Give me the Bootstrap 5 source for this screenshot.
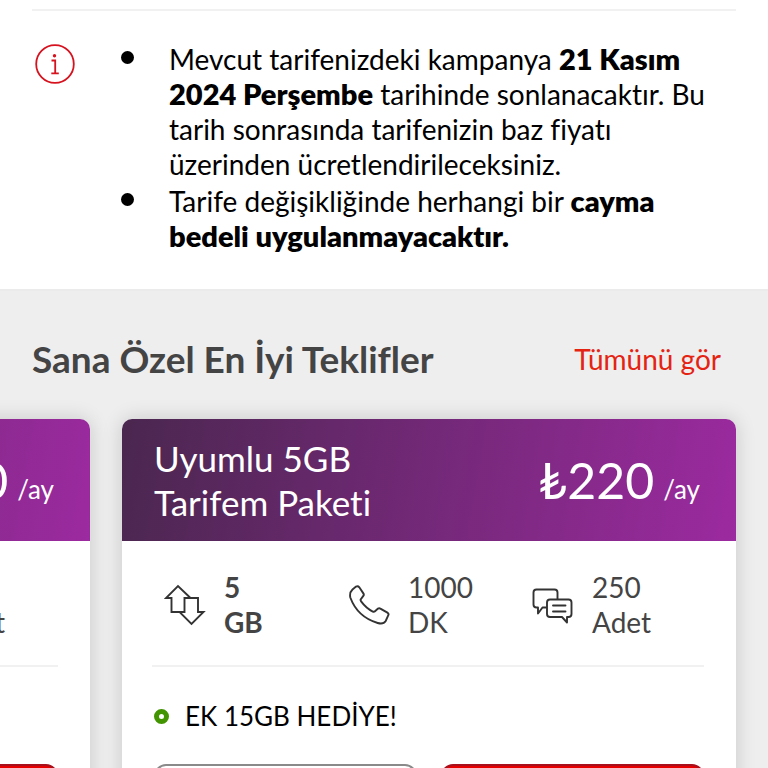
<!DOCTYPE html>
<html lang="tr">
<head>
<meta charset="utf-8">
<meta name="viewport" content="width=device-width, initial-scale=1">
<title>Sana Özel En İyi Teklifler</title>
<link href="https://cdn.jsdelivr.net/npm/bootstrap@5.3.0/dist/css/bootstrap.min.css" rel="stylesheet">
<style>
  body { font-family: Lato, "Noto Sans", sans-serif; font-size: 28px; line-height: 35px; font-variant-ligatures: none; color: #000; background: #eee; }
  .notice { padding: 9px 32px 35px; }
  .rule { height: 2px; margin: 0; border: 0; opacity: 1; background: #f1f1f1; }
  .notice-row { gap: 46px; padding: 31px 14px 0 3px; }
  .info-icon { width: 40px; height: 40px; margin-top: 2px; }
  .notice-list li { display: flex; gap: 35px; }
  .notice-list li::before { content: ""; flex: none; width: 13px; height: 13px; margin-top: 9px; border-radius: 50%; background: #000; }
  .notice-list li + li { margin-top: 2px; }
  .notice-list b { font-size: 29px; line-height: 1; font-weight: 800; }
  .offers { border-top: 2px solid #ebebeb; }
  .offers-head { padding: 46px 47px 38px 32px; }
  .offers-title { font-size: 37px; line-height: 44px; font-weight: 700; color: #444; }
  .offers-all { color: #e42313; }
  .offers-track { gap: 32px; padding-right: 32px; padding-bottom: 32px; }
  .offer { flex: 0 0 calc(100% - 122px); border-radius: 10px; box-shadow: 0 0 20px rgba(0,0,0,.16); background: #fff; }
  .offer-head { padding: 17px 36px 17px 32px; border-radius: 10px 10px 0 0; background: linear-gradient(100deg, #4a274f 0%, #9c2aa0 100%); }
  .offer-name { font-size: 35px; line-height: 44px; font-weight: 400; }
  .offer-price { gap: 9px; font-size: 50px; line-height: 72px; }
  .offer-unit { font-size: 26px; line-height: 35px; }
  .offer-stats { margin: 0 32px 0 30px; padding: 29px 0 25px; border-bottom: 2px solid #f1f1f1; color: #444; }
  .offer-stats svg { flex: none; width: 42px; height: 42px; }
  .offer-stats .stat { gap: 18px; padding-left: 12px; }
  .offer-gift { gap: 16px; padding: 32px 32px 30px; font-size: 26px; }
  .gift-dot { width: 15px; height: 15px; border: 5px solid #429400; border-radius: 50%; }
  .offer-actions { gap: 24px; padding: 0 32px 32px; }
  .offer-actions .btn { height: 72px; border: 2px solid #8a8a8a; border-radius: 12px; background: #fff; }
  .offer-actions .btn-buy { border-color: #a8101c; background: #e60000; }
</style>
</head>
<body>
<svg class="d-none" aria-hidden="true">
  <symbol id="i-data" viewBox="0 2.500 42 42"><g fill="none" stroke="#333" stroke-width="1.900"><path d="M20 30.500H7.500V16.500H2L14 4.500l12.500 12"/><path d="M20.500 30.500V16.500h13.500v14h5.500L27.500 42.500 15.500 30.500z"/></g></symbol>
  <symbol id="i-call" viewBox="0 1 42 42"><path d="M4.500 6.500L8 3.600q2-1 3.300.7l4.200 6.300q.7 1.200-.2 2.300l-2.600 3.500q-.4 1 .4 2 5 6.800 11.700 10.200 1.300.4 2.200-.4l3-2.600q1.200-.8 2.400 0l7 4q1.800 1.200.8 2.800l-2.500 5.600q-2.200 3.600-8 2Q9.500 34 2.300 14.500 1.300 9.500 4.500 6.500z" fill="none" stroke="#333" stroke-width="1.900"/></symbol>
  <symbol id="i-chat" viewBox="1 2 42 42"><g fill="none" stroke="#333" stroke-width="1.900" stroke-linejoin="round" stroke-linecap="round"><path d="M15 25.500h-3.500L7 31.500v-6H5.500q-3 0-3-3v-12q0-3 3-3h18q3 0 3 3v6.500"/><path d="M19 17.500h18.500q3 0 3 3v11.500q0 3-3 3h-1.500v5.500l-5-5.500H19q-3 0-3-3V20.500q0-3 3-3zM22 23.500h12.500M22 29.500h12.500"/></g></symbol>
</svg>

<section class="notice bg-white">
  <hr class="rule">
  <div class="notice-row d-flex align-items-start">
    <svg class="info-icon flex-shrink-0" viewBox="0 0 40 40" role="img" aria-label="Bilgi">
      <circle cx="20" cy="20" r="18.800" fill="none" stroke="#d5121e" stroke-width="1.800"/>
      <circle cx="19.500" cy="11.700" r="1.700" fill="#d5121e"/>
      <path d="M16.500 16.500h3.700v12.700M16.300 29.300h7.500" fill="none" stroke="#d5121e" stroke-width="1.800"/>
    </svg>
    <ul class="notice-list list-unstyled mb-0">
      <li><span>Mevcut tarifenizdeki kampanya <b>21 Kasım 2024 Perşembe</b> tarihinde sonlanacaktır. Bu tarih sonrasında tarifenizin baz fiyatı üzerinden ücretlendirileceksiniz.</span></li>
      <li><span>Tarife değişikliğinde herhangi bir <b>cayma bedeli uygulanmayacaktır.</b></span></li>
    </ul>
  </div>
</section>

<section class="offers overflow-hidden">
  <div class="offers-head d-flex justify-content-between align-items-center">
    <h2 class="offers-title mb-0">Sana Özel En İyi Teklifler</h2>
    <a class="offers-all text-decoration-none" href="#">Tümünü gör</a>
  </div>
  <div class="offers-track d-flex justify-content-end">
    <article class="offer">
      <header class="offer-head d-flex justify-content-between align-items-center text-white">
        <h3 class="offer-name mb-0">Uyumlu 3GB<br>Tarifem Paketi</h3>
        <div class="offer-price d-flex align-items-baseline text-nowrap"><span>₺200</span><span class="offer-unit">/ay</span></div>
      </header>
      <div class="offer-stats row g-0">
        <div class="stat col-4 d-flex align-items-center"><svg aria-hidden="true"><use href="#i-data"/></svg><b>3<br>GB</b></div>
        <div class="stat col-4 d-flex align-items-center"><svg aria-hidden="true"><use href="#i-call"/></svg><span>500<br>DK</span></div>
        <div class="stat col-4 d-flex align-items-center"><svg aria-hidden="true"><use href="#i-chat"/></svg><span>250<br>Adet</span></div>
      </div>
      <div class="offer-gift d-flex align-items-center"><span class="gift-dot"></span>EK 5GB HEDİYE!</div>
      <div class="offer-actions d-flex">
        <button type="button" class="btn flex-fill" aria-label="Detaylar"></button>
        <button type="button" class="btn btn-buy flex-fill" aria-label="Satın al"></button>
      </div>
    </article>
    <article class="offer">
      <header class="offer-head d-flex justify-content-between align-items-center text-white">
        <h3 class="offer-name mb-0">Uyumlu 5GB<br>Tarifem Paketi</h3>
        <div class="offer-price d-flex align-items-baseline text-nowrap"><span>₺220</span><span class="offer-unit">/ay</span></div>
      </header>
      <div class="offer-stats row g-0">
        <div class="stat col-4 d-flex align-items-center"><svg aria-hidden="true"><use href="#i-data"/></svg><b>5<br>GB</b></div>
        <div class="stat col-4 d-flex align-items-center"><svg aria-hidden="true"><use href="#i-call"/></svg><span>1000<br>DK</span></div>
        <div class="stat col-4 d-flex align-items-center"><svg aria-hidden="true"><use href="#i-chat"/></svg><span>250<br>Adet</span></div>
      </div>
      <div class="offer-gift d-flex align-items-center"><span class="gift-dot"></span>EK 15GB HEDİYE!</div>
      <div class="offer-actions d-flex">
        <button type="button" class="btn flex-fill" aria-label="Detaylar"></button>
        <button type="button" class="btn btn-buy flex-fill" aria-label="Satın al"></button>
      </div>
    </article>
  </div>
</section>
<script src="https://cdn.jsdelivr.net/npm/bootstrap@5.3.0/dist/js/bootstrap.bundle.min.js"></script>
</body>
</html>
